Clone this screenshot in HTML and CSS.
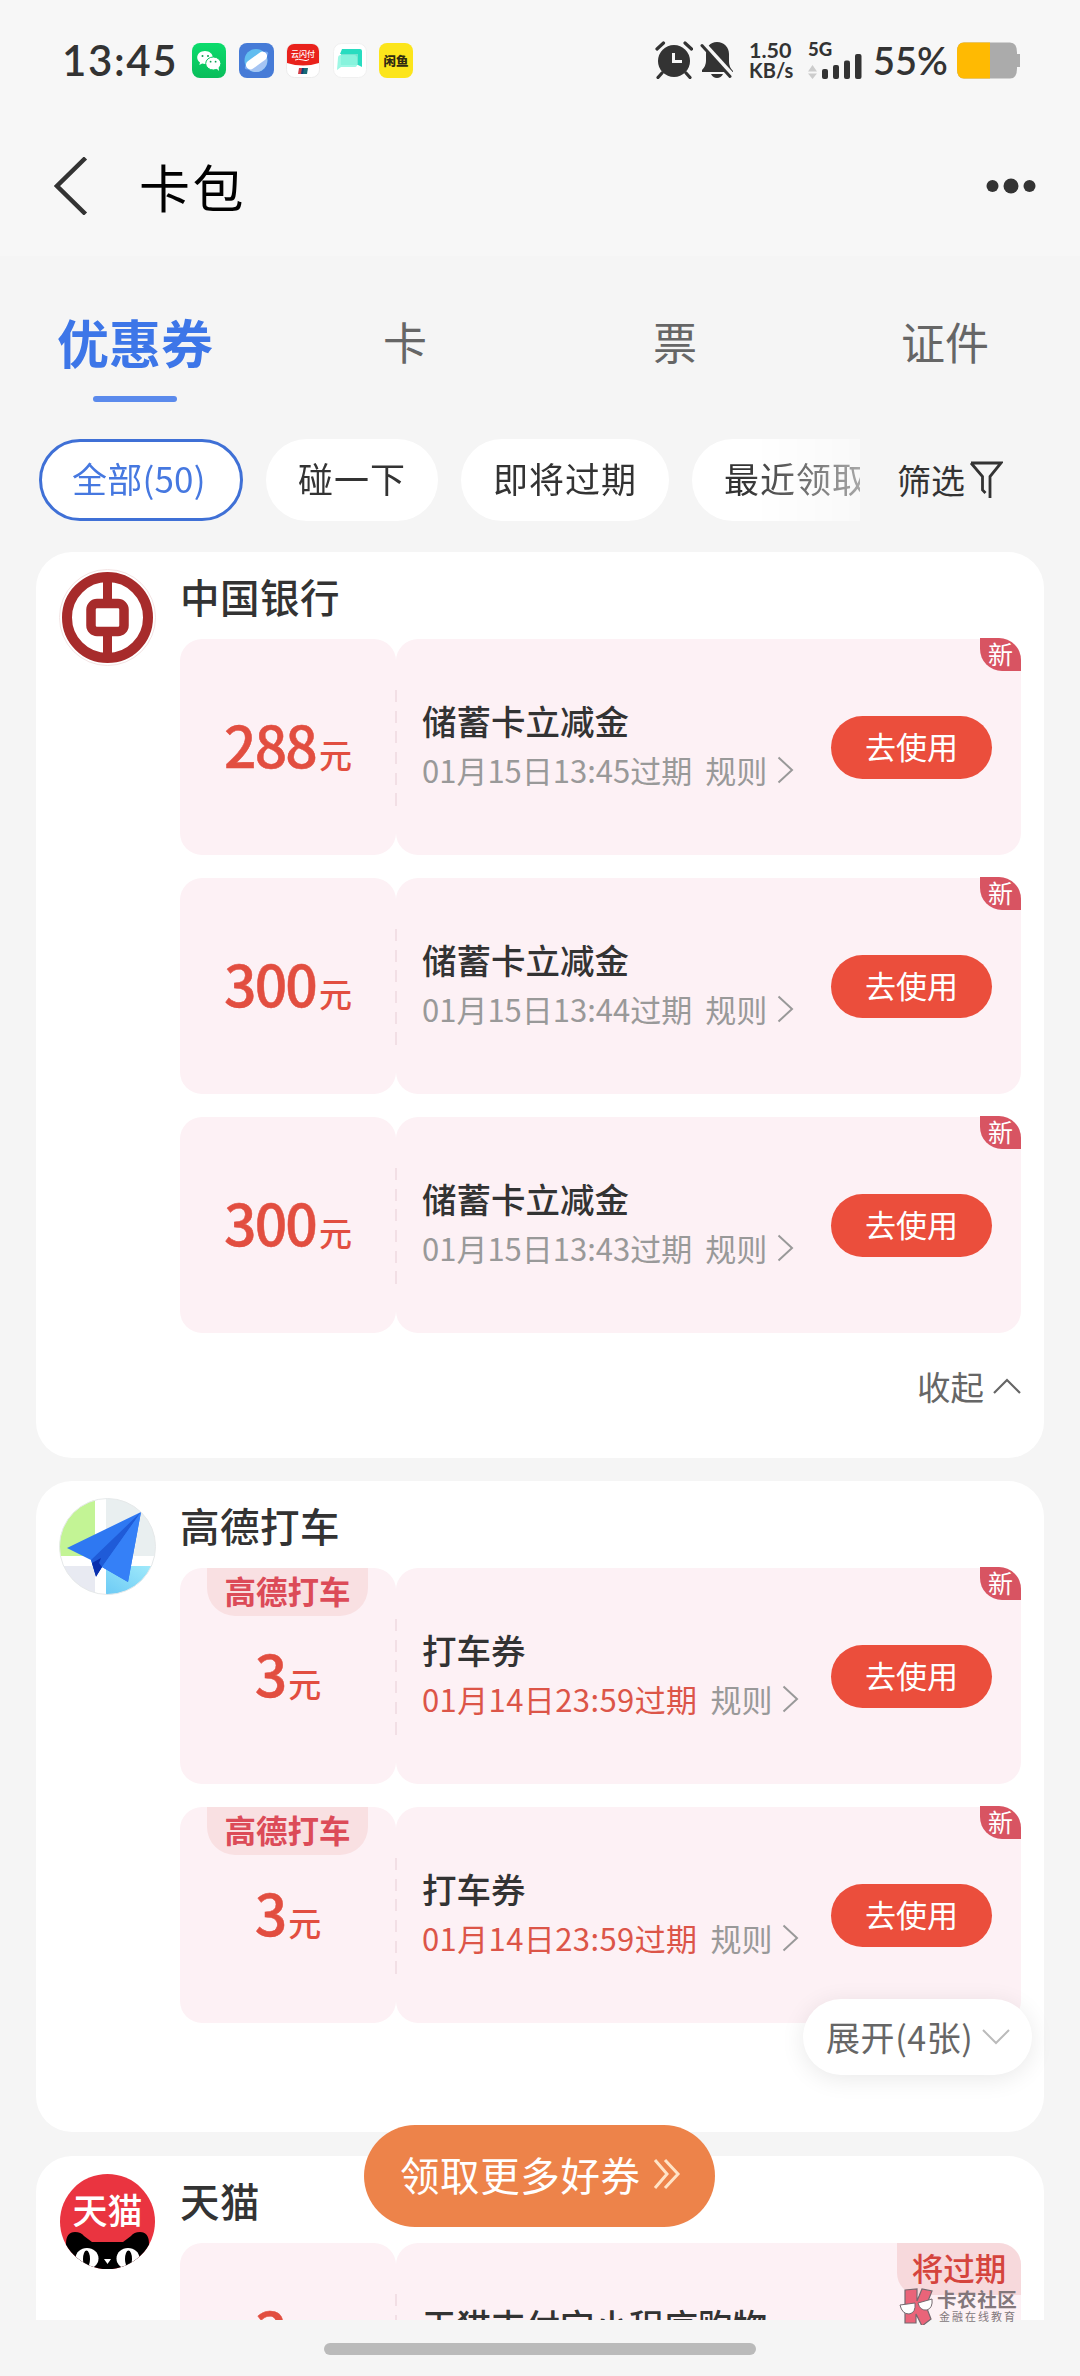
FILE: index.html
```html
<!DOCTYPE html>
<html lang="zh-CN">
<head>
<meta charset="utf-8">
<title>卡包</title>
<link rel="stylesheet" href="styles.css">
</head>
<body>
<div class="phone">
  <div class="status">
    <div class="time">13:45</div>
    <div class="apps">
      <svg width="34" height="35" viewBox="0 0 34 35"><defs><linearGradient id="wx" x1="0" y1="0" x2="0" y2="1"><stop offset="0" stop-color="#0bdc6c"/><stop offset="1" stop-color="#09bd5b"/></linearGradient></defs><rect width="34" height="35" rx="8" fill="url(#wx)"/><path d="M13 8c-4.400 0-7.800 2.800-7.800 6.500 0 2 1.100 3.700 2.800 4.900l-.7 2.600 2.900-1.500c.9.300 1.800.4 2.800.4 4.400 0 7.800-2.800 7.800-6.400S17.400 8 13 8z" fill="#fff"/><ellipse cx="21.300" cy="20.500" rx="7.600" ry="6.500" fill="#fff" stroke="#0acb62" stroke-width="1"/><path d="M24 25l3 3-.5-4z" fill="#fff"/><g fill="#0b9f50"><circle cx="10.500" cy="13" r="1"/><circle cx="16" cy="13" r="1"/><circle cx="18.600" cy="18.700" r=".9"/><circle cx="23.600" cy="18.700" r=".9"/></g></svg>
      <svg width="35" height="35" viewBox="0 0 35 35"><rect width="35" height="35" rx="8" fill="#467bd7"/><circle cx="17" cy="17.500" r="11.500" fill="#62bdf0"/><path d="M9 26a11.500 11.500 0 0 0 19-11z" fill="#a5c4f3"/><ellipse cx="17.500" cy="17.500" rx="14" ry="4.500" transform="rotate(-36 17.500 17.500)" fill="#78aaf0"/><rect x="5.500" y="13" width="24" height="9" rx="4.500" transform="rotate(-36 17.500 17.500)" fill="#fff"/></svg>
      <svg width="34" height="35" viewBox="0 0 34 35"><rect x=".5" y=".5" width="33" height="34" rx="8" fill="#fff" stroke="#ececec"/><path d="M8 1h18a7 7 0 0 1 7 7v12q-16 5-32 0V8a7 7 0 0 1 7-7z" fill="#e9221c"/><text x="17" y="14" class="app-label" font-size="8" fill="#fff" text-anchor="middle">云闪付</text><path d="M9 17q3-1.500 8 0 3 1.500 6-.500" stroke="#fff" fill="none"/><path d="M13 25h4l-1 6h-4z" fill="#d13c46"/><path d="M16 25h3l-1 6h-3z" fill="#123d74"/><path d="M18 25h4l-1 6h-4z" fill="#166b78"/></svg>
      <svg width="34" height="35" viewBox="0 0 34 35"><rect x=".5" y=".5" width="33" height="34" rx="8" fill="#fff" stroke="#f0f0f0"/><path d="M9 6h18q2 0 2 2v16l-4-2V11H7z" fill="#28dcc0"/><path d="M8 11h17v11H8z" fill="#73e5d1"/><path d="M5 15q0-3 3-3h13q3 0 3 3v7q0 2-3 2H8l-4 3z" fill="#8cf6df" opacity=".85"/></svg>
      <svg width="34" height="35" viewBox="0 0 34 35"><rect width="34" height="35" rx="8" fill="#fce51b"/><text x="17" y="22.500" class="app-label heavy" font-size="12.500" fill="#302b12" text-anchor="middle">闲鱼</text></svg>
    </div>
    <div class="status-right">
      <svg class="alarm" width="38" height="38" viewBox="0 0 38 38"><circle cx="19" cy="20" r="16" fill="#333"/><path d="M18.500 12v8.500H27" fill="none" stroke="#f7f7f7" stroke-width="3"/><path d="M2 8l6.500-6M30 2l6.500 6M7 32l-4 4.500M31 32l4 4.500" stroke="#333" stroke-width="3.200" stroke-linecap="round"/></svg>
      <svg class="bell" width="34" height="38" viewBox="0 0 34 38"><path d="M17 1c7 0 12 5 12 12v8q0 5 4 9v1H2v-2q4-4 4-9v-7C6 6 10 1 17 1z" fill="#333"/><path d="M11 33h12q-2 4-6 4t-6-4z" fill="#333"/><path d="M2 1l31 34" stroke="#f7f7f7" stroke-width="5"/><path d="M2 4.500l28 31" stroke="#333" stroke-width="3" stroke-linecap="round"/></svg>
      <div class="speed"><span class="speed-value">1.50</span><span>KB/s</span></div>
      <div class="signal">
        <span class="net">5G</span>
        <svg width="54" height="26" viewBox="0 0 54 26"><path d="M0 18.500l4.500-6.500 4.500 6.500zM0 20.500l4.500 5.500 4.500-5.500z" fill="#ccc"/><g fill="#333"><rect x="14" y="16" width="6" height="10" rx="2"/><rect x="25" y="12" width="6" height="14" rx="2"/><rect x="36" y="7.500" width="6" height="18.500" rx="2"/><rect x="47" y="1" width="6.500" height="25" rx="2"/></g></svg>
      </div>
      <div class="percent">55%</div>
      <svg width="63" height="37" viewBox="0 0 63 37"><path d="M7 .5h46q7 0 7 10v16q0 10-7 10H7q-7 0-7-9v-18q0-9 7-9z" fill="#ababab"/><path d="M7 .5h26v36H7q-7 0-7-9v-18q0-9 7-9z" fill="#ffba02"/><path d="M59 12h4v13h-4z" fill="#ababab"/></svg>
    </div>
  </div>

  <header class="topbar">
    <svg width="34" height="58" viewBox="0 0 34 58"><path d="M31.500 1L3 29l28.500 28" fill="none" stroke="#333" stroke-width="4.500"/></svg>
    <h1>卡包</h1>
    <svg width="50" height="16" viewBox="0 0 50 16" fill="#333"><circle cx="6.500" cy="8" r="6"/><circle cx="25" cy="8" r="7.500"/><circle cx="43.500" cy="8" r="6"/></svg>
  </header>

  <main class="content">
    <nav class="tabs">
      <div class="tab active">优惠券</div>
      <div class="tab">卡</div>
      <div class="tab">票</div>
      <div class="tab">证件</div>
    </nav>

    <div class="filters">
      <div class="chips">
        <div class="chip selected">全部(50)</div>
        <div class="chip">碰一下</div>
        <div class="chip">即将过期</div>
        <div class="chip">最近领取</div>
      </div>
      <div class="sift">筛选<svg width="34" height="40" viewBox="0 0 34 40"><path d="M2 3h30L21 16.500V38M2 3l11.500 13.500V30l3 3" fill="none" stroke="#333" stroke-width="2.800"/></svg></div>
    </div>

    <div class="groups">
      <section class="group">
        <svg class="logo" width="97" height="97" viewBox="0 0 97 97"><circle cx="48.500" cy="48.500" r="48" fill="#fff" stroke="#f3e4e4"/><circle cx="48.500" cy="48.500" r="40.500" fill="none" stroke="#a72b2b" stroke-width="10"/><path d="M48.500 8v22M48.500 66v23" stroke="#a72b2b" stroke-width="9"/><rect x="32" y="34.500" width="33" height="28" rx="6" fill="#fff" stroke="#a72b2b" stroke-width="9.500"/></svg>
        <h2>中国银行</h2>
        <div class="coupons">
          <article class="coupon">
            <div class="value"><b>288</b><span>元</span></div>
            <div class="detail"><div class="info"><h3>储蓄卡立减金</h3><p><span class="date">01月15日13:45过期</span><span class="rule">规则</span><svg width="17" height="28" viewBox="0 0 17 28"><path d="M1.500 1.500L15 14 1.500 26.500"/></svg></p></div><div class="use">去使用</div></div>
            <span class="new">新</span>
          </article>
          <article class="coupon">
            <div class="value"><b>300</b><span>元</span></div>
            <div class="detail"><div class="info"><h3>储蓄卡立减金</h3><p><span class="date">01月15日13:44过期</span><span class="rule">规则</span><svg width="17" height="28" viewBox="0 0 17 28"><path d="M1.500 1.500L15 14 1.500 26.500"/></svg></p></div><div class="use">去使用</div></div>
            <span class="new">新</span>
          </article>
          <article class="coupon">
            <div class="value"><b>300</b><span>元</span></div>
            <div class="detail"><div class="info"><h3>储蓄卡立减金</h3><p><span class="date">01月15日13:43过期</span><span class="rule">规则</span><svg width="17" height="28" viewBox="0 0 17 28"><path d="M1.500 1.500L15 14 1.500 26.500"/></svg></p></div><div class="use">去使用</div></div>
            <span class="new">新</span>
          </article>
        </div>
        <div class="collapse">收起<svg width="28" height="16" viewBox="0 0 28 16"><path d="M1 15L14 2l13 13" fill="none" stroke="#666" stroke-width="2.200"/></svg></div>
      </section>

      <section class="group folded">
        <svg class="logo" width="97" height="97" viewBox="0 0 97 97"><defs><clipPath id="round"><circle cx="48.500" cy="48.500" r="48"/></clipPath><linearGradient id="sky" x1="0" y1="1" x2="1" y2="0"><stop offset="0" stop-color="#6ccaf5"/><stop offset="1" stop-color="#a2ebfb"/></linearGradient></defs><g clip-path="url(#round)"><path fill="#fff" d="M0 0h97v97H0z"/><path fill="#c3f495" d="M0 0h36v58H0z"/><path fill="#e9eff0" d="M47 0h50v58H47z"/><path fill="#e8eaf2" d="M0 68h36v29H0z"/><path fill="url(#sky)" d="M47 68h50v29H47z"/></g><path d="M82 14L8 50l24 12 5 16 6-9 26 15z" fill="#2e78f2"/><path d="M82 14L32 62l5 16 6-9z" fill="#1f5bd8"/><path d="M82 14L43 69l26 15z" fill="#3580f7"/><path d="M33 65l4 14 6-10-3-4 2-5z" fill="#0a2fad"/><circle cx="48.500" cy="48.500" r="48" fill="none" stroke="#e6e9ea"/></svg>
        <h2>高德打车</h2>
        <div class="coupons">
          <article class="coupon">
            <div class="value"><i class="brand">高德打车</i><b>3</b><span>元</span></div>
            <div class="detail"><div class="info"><h3>打车券</h3><p><span class="date urgent">01月14日23:59过期</span><span class="rule">规则</span><svg width="17" height="28" viewBox="0 0 17 28"><path d="M1.500 1.500L15 14 1.500 26.500"/></svg></p></div><div class="use">去使用</div></div>
            <span class="new">新</span>
          </article>
          <article class="coupon">
            <div class="value"><i class="brand">高德打车</i><b>3</b><span>元</span></div>
            <div class="detail"><div class="info"><h3>打车券</h3><p><span class="date urgent">01月14日23:59过期</span><span class="rule">规则</span><svg width="17" height="28" viewBox="0 0 17 28"><path d="M1.500 1.500L15 14 1.500 26.500"/></svg></p></div><div class="use">去使用</div></div>
            <span class="new">新</span>
          </article>
        </div>
        <div class="expand">展开(4张)<svg width="28" height="16" viewBox="0 0 28 16"><path d="M1 1l13 13L27 1" fill="none" stroke="#bbb" stroke-width="2"/></svg></div>
      </section>

      <section class="group last">
        <svg class="logo" width="97" height="97" viewBox="0 0 97 97"><defs><clipPath id="cat"><circle cx="48.500" cy="48.500" r="47.500"/></clipPath></defs><g clip-path="url(#cat)"><path fill="#ea3440" d="M0 0h97v97H0z"/><path d="M0 97V78l7-7q0-12 9-12 6 0 9 4l8 6h31l8-6q3-4 9-4 9 0 9 12l7 7v19z" fill="#000"/><ellipse cx="28" cy="85.500" rx="11.500" ry="10.500" fill="#fff"/><ellipse cx="69" cy="85.500" rx="11.500" ry="10.500" fill="#fff"/><ellipse cx="27.500" cy="86" rx="3.500" ry="8.500" fill="#000"/><ellipse cx="69.500" cy="86" rx="3.500" ry="8.500" fill="#000"/><path d="M45 86h7l-3.500 5z" fill="#fff"/></g><text x="48.500" y="51" class="app-label" font-size="35" fill="#fff" text-anchor="middle">天猫</text></svg>
        <h2>天猫</h2>
        <div class="coupons">
          <article class="coupon">
            <div class="value raised"><b>3</b><span>元</span></div>
            <div class="detail"><div class="info"><h3>天猫支付宝小程序购物</h3></div></div>
            <span class="soon">将过期</span>
          </article>
        </div>
      </section>
    </div>
  </main>

  <footer class="home"><div class="home-bar"></div></footer>

  <div class="more">领取更多好券<svg width="28" height="32" viewBox="0 0 28 32"><path d="M2 2l12 14L2 30M12 2l13 14-13 14" fill="none" stroke="#ffe3c6" stroke-width="3"/></svg></div>

  <div class="community">
    <svg width="35" height="37" viewBox="0 0 35 37"><path d="M6 2l12-1v12l5-12 10 2-6 15 5 13-9 7-6-12v9H6V16z" fill="#ea6479" stroke="#756a70" stroke-width="1.200"/><path d="M1 17l15-2q1 10-6 11-7 0-9-9zM19 15l14-4q1 9-5 11-7 1-9-7z" fill="#fff" stroke="#756a70" stroke-width="1"/></svg>
    <div class="community-text"><strong>卡农社区</strong><span>金融在线教育</span></div>
  </div>
</div>
</body>
</html>
```
FILE: styles.css
```css
* { box-sizing: border-box; }

body {
  margin: 0;
  font-family: "Noto Sans CJK SC", sans-serif;
  color: #333;
  background: #f5f5f5;
}

h1, h2, h3, p { margin: 0; font-weight: 400; }
svg { display: block; flex: none; }
.app-label { font-family: "Noto Sans CJK SC", sans-serif; font-weight: 500; }
.heavy { font-weight: 900; }

.phone {
  position: relative;
  display: flex;
  flex-direction: column;
  width: 1080px;
  height: 2376px;
  overflow: hidden;
  white-space: nowrap;
}

/* Status bar */
.status {
  display: flex;
  align-items: center;
  height: 120px;
  padding: 0 60px 0 62px;
  background: #f7f7f7;
  font-family: Lato, "Noto Sans CJK SC", sans-serif;
}
.time { width: 130px; font-size: 42px; font-weight: 600; letter-spacing: 1.600px; line-height: 50px; }
.apps { display: flex; gap: 12.500px; }
.status-right { display: flex; align-items: center; margin-left: auto; }
.bell { margin-left: 7px; }
.speed {
  display: flex;
  flex-direction: column;
  width: 44px;
  margin-left: 15px;
  font-size: 20px;
  font-weight: 700;
  line-height: 20px;
}
.speed-value { font-size: 21.500px; }
.signal { width: 54px; margin-left: 15px; height: 37px; display: flex; flex-direction: column; }
.net { font-size: 18.500px; line-height: 14px; height: 11px; font-weight: 900; }
.percent { width: 84px; margin-left: 11px; font-size: 38px; font-weight: 600; line-height: 46px; }

/* Title bar */
.topbar {
  display: flex;
  align-items: center;
  height: 136px;
  padding: 0 44px 4px 54px;
  background: #f7f7f7;
}
.topbar h1 { flex: 1; margin-left: 51px; font-size: 51px; line-height: 60px; letter-spacing: 2.500px; color: #000; }

.content { height: 2064px; overflow: hidden; }

/* Category tabs */
.tabs { display: grid; grid-template-columns: repeat(4, 1fr); height: 183px; padding-top: 55px; }
.tab { font-size: 44px; line-height: 61px; color: #666; text-align: center; }
.tab.active { font-size: 52px; font-weight: 700; color: #3d76e8; }
.tab.active::after {
  content: "";
  display: block;
  width: 84px;
  height: 6px;
  margin: 24px auto 0;
  border-radius: 3px;
  background: #5b8aec;
}

/* Filter chips */
.filters { display: flex; align-items: center; height: 82px; padding-left: 39px; }
.chips {
  display: flex;
  gap: 23px;
  width: 821px;
  overflow: hidden;
  -webkit-mask-image: linear-gradient(90deg, #000 86%, rgba(0, 0, 0, .4) 100%);
  mask-image: linear-gradient(90deg, #000 86%, rgba(0, 0, 0, .4) 100%);
}
.chip {
  flex: none;
  height: 82px;
  padding: 0 32px;
  border-radius: 41px;
  background: #fff;
  font-size: 35px;
  letter-spacing: 1px;
  line-height: 78px;
}
.chip.selected { width: 204px; padding: 0 30px; border: 3px solid #3f70d6; line-height: 72px; color: #4678e0; letter-spacing: .2px; }
.sift { display: flex; align-items: center; gap: 4px; margin-left: 37px; font-size: 34px; line-height: 78px; }

/* Merchant groups */
.groups { display: flex; flex-direction: column; gap: 23px; padding: 31px 36px 0; }
.group {
  position: relative;
  display: grid;
  grid-template-columns: 121px 841px;
  padding: 17px 23px 0;
  border-radius: 36px;
  background: #fff;
}
.logo { grid-row: 1 / 3; }
.group h2 { height: 70px; font-size: 39.500px; font-weight: 500; line-height: 53px; letter-spacing: .5px; }
.coupons { grid-column: 2; display: flex; flex-direction: column; gap: 23px; }
.folded { padding-bottom: 109px; }
.last { margin-top: 1px; }

.coupon { position: relative; display: flex; height: 216px; }
.value {
  position: relative;
  display: flex;
  justify-content: center;
  align-items: baseline;
  width: 216px;
  padding-top: 64px;
  border-radius: 22px;
  background: #fdf1f5;
  color: #e24e40;
}
.value b { font-size: 57px; font-weight: 500; line-height: 80px; letter-spacing: -1.800px; -webkit-text-stroke: .5px #e24e40; }
.value span { margin-left: 3px; font-size: 33px; font-weight: 500; }
.value.raised { padding-top: 46px; }

.brand {
  position: absolute;
  top: 0;
  left: 27px;
  width: 161px;
  height: 48px;
  border-radius: 0 0 28px 28px;
  background: #f9e0e2;
  color: #dc4b58;
  font-size: 31.500px;
  font-style: normal;
  font-weight: 700;
  line-height: 45px;
  text-align: center;
}

.detail {
  position: relative;
  flex: 1;
  display: flex;
  align-items: flex-start;
  justify-content: space-between;
  padding: 0 29px 0 26px;
  border-radius: 22px;
  background: #fdf1f5;
}
.detail::before {
  content: "";
  position: absolute;
  left: -1px;
  top: 51px;
  width: 2px;
  height: 116px;
  background: repeating-linear-gradient(#f2dfe5 0 12px, transparent 12px 20.700px);
}
.info { padding-top: 56px; }
.info h3 { font-size: 34.500px; font-weight: 500; line-height: 50px; }
.info p { display: flex; align-items: center; margin-top: 3px; font-size: 31px; line-height: 44px; color: #999; }
.info p svg { margin-left: 10px; fill: none; stroke: #999; stroke-width: 2; }
.date.urgent { color: #dc5548; letter-spacing: .4px; }
.rule { margin-left: 13px; }

.use {
  width: 161px;
  height: 63px;
  margin-top: 77px;
  border-radius: 32px;
  background: #eb4e3c;
  color: #fff;
  font-size: 31px;
  line-height: 59px;
  text-align: center;
}

.new {
  position: absolute;
  top: -1px;
  right: 0;
  width: 41px;
  height: 33px;
  border-radius: 0 22px;
  background: #d85462;
  color: #fff;
  font-size: 25px;
  line-height: 30px;
  text-align: center;
}
.soon {
  position: absolute;
  top: 0;
  right: 0;
  width: 124px;
  height: 52px;
  border-radius: 0 22px;
  background: #f7d9dc;
  color: #d5443d;
  font-size: 31.500px;
  font-weight: 500;
  line-height: 48px;
  text-align: center;
}

.collapse {
  grid-column: 2;
  display: flex;
  align-items: center;
  justify-content: flex-end;
  gap: 9px;
  margin: 28px 0 47px;
  font-size: 33.500px;
  line-height: 50px;
  color: #666;
}
.expand {
  position: absolute;
  right: 12px;
  bottom: 57px;
  display: flex;
  align-items: center;
  gap: 9px;
  width: 229px;
  height: 76px;
  padding-left: 23px;
  border-radius: 38px;
  background: #fff;
  box-shadow: 0 4px 24px rgba(0, 0, 0, .09);
  color: #666;
  font-size: 34px;
  letter-spacing: .6px;
  line-height: 72px;
}

/* Home indicator */
.home { height: 56px; padding-top: 23px; }
.home-bar { width: 432px; height: 12px; margin: 0 auto; border-radius: 6px; background: #bababa; }

/* Floating call to action */
.more {
  position: absolute;
  left: 364px;
  top: 2125px;
  display: flex;
  align-items: center;
  gap: 12px;
  width: 351px;
  height: 102px;
  padding: 0 0 4px 36px;
  border-radius: 51px;
  background: #ed834a;
  color: #fff;
  font-size: 39.500px;
  letter-spacing: .6px;
  line-height: 96px;
}

/* Community mark */
.community { position: absolute; left: 899px; top: 2288px; display: flex; }
.community-text { display: flex; flex-direction: column; margin-left: 3px; color: #82777b; }
.community-text strong { font-size: 19.500px; font-weight: 700; line-height: 22px; letter-spacing: .6px; }
.community-text span { padding-left: 2px; font-size: 11px; line-height: 12px; letter-spacing: 2px; }
```
